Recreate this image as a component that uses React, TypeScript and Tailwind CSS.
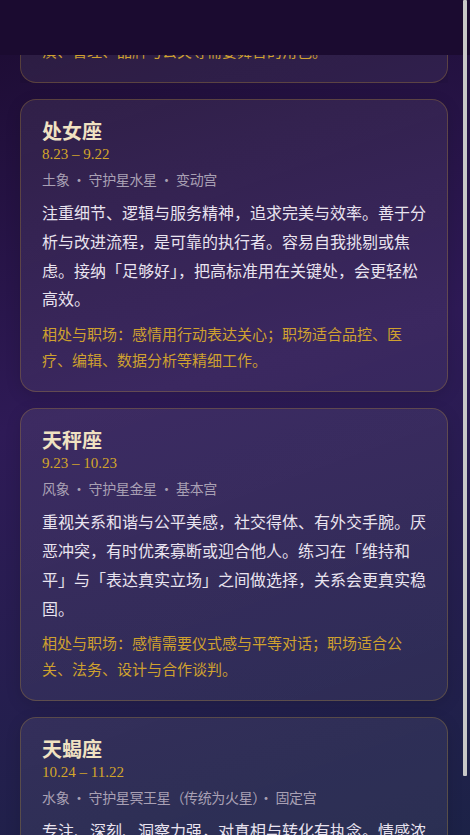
import React from "react";

interface Sign {
    name: string;
    dates: string;
    meta: string;
    desc: string;
    tips: string;
}

const signs: Sign[] = [
    {
        name: "狮子座",
        dates: "7.23 – 8.22",
        meta: "火象 · 守护星太阳 · 固定宫",
        desc: "热情、自信、有领导气场，喜欢被看见与被肯定。慷慨大方，愿意照顾身边的人。需要留意自尊心过强，学会倾听与分享舞台。",
        tips: "相处与职场：感情需要被欣赏与热烈回应；职场适合表演、管理、品牌与公关等需要舞台的角色。",
    },
    {
        name: "处女座",
        dates: "8.23 – 9.22",
        meta: "土象 · 守护星水星 · 变动宫",
        desc: "注重细节、逻辑与服务精神，追求完美与效率。善于分析与改进流程，是可靠的执行者。容易自我挑剔或焦虑。接纳「足够好」，把高标准用在关键处，会更轻松高效。",
        tips: "相处与职场：感情用行动表达关心；职场适合品控、医疗、编辑、数据分析等精细工作。",
    },
    {
        name: "天秤座",
        dates: "9.23 – 10.23",
        meta: "风象 · 守护星金星 · 基本宫",
        desc: "重视关系和谐与公平美感，社交得体、有外交手腕。厌恶冲突，有时优柔寡断或迎合他人。练习在「维持和平」与「表达真实立场」之间做选择，关系会更真实稳固。",
        tips: "相处与职场：感情需要仪式感与平等对话；职场适合公关、法务、设计与合作谈判。",
    },
    {
        name: "天蝎座",
        dates: "10.24 – 11.22",
        meta: "水象 · 守护星冥王星（传统为火星）· 固定宫",
        desc: "专注、深刻、洞察力强，对真相与转化有执念。情感浓烈而忠诚，信任建立缓慢但一旦认定便全情投入。学会放下控制与猜疑，会让关系更松弛。",
        tips: "相处与职场：感情需要深度与专一；职场适合研究、心理、金融与调查类工作。",
    },
];

const SignCard: React.FC<{ sign: Sign }> = ({ sign }) => {
    return (
        <div className="rounded-2xl border border-[rgba(212,166,42,0.26)] bg-[linear-gradient(160deg,rgba(255,255,255,0.075),rgba(255,255,255,0.06))] px-[21px] pt-5 pb-[19px] shadow-[0_4px_16px_rgba(0,0,0,0.12)]">
            <div className="text-[20px] leading-[24px] font-bold text-[#f0e2c2] [font-family:'Liberation_Serif','Noto_Sans_CJK_SC',serif]">
                {sign.name}
            </div>
            <div className="text-[15px] leading-[21px] text-[#d4a62a] [font-family:'Liberation_Serif',serif]">
                {sign.dates}
            </div>
            <div className="mt-1 text-[14px] leading-[21px] tracking-[-0.35px] text-[#a9a0b4]">{sign.meta}</div>
            <p className="mt-2 text-[16px] leading-[28.8px] text-[#e9e3ef]">{sign.desc}</p>
            <p className="mt-2 text-[15px] leading-[25.5px] text-[#cfa12f]">{sign.tips}</p>
        </div>
    );
};

export default function App() {
    return (
        <div className="relative h-[835px] overflow-hidden bg-[linear-gradient(165deg,#1c0b31_0%,#2e1a56_45%,#1c2247_100%)] [font-family:'Noto_Sans_CJK_SC','Noto_Sans',sans-serif]">
            {/* top bar covering the scrolled-off content */}
            <div className="absolute inset-x-0 top-0 z-10 h-[55px] bg-[#1b0b30]" />
            {/* window scrollbar thumb */}
            <div className="absolute right-[3px] top-0 z-20 h-[776px] w-[4px] rounded-[1px] bg-[#c8c8c8]" />
            <div className="flex flex-col gap-4 pl-5 pr-[22px]">
                {/* previous card, mostly scrolled past */}
                <div className="flex h-[83px] flex-col justify-end overflow-hidden">
                    <SignCard sign={signs[0]} />
                </div>
                {signs.slice(1).map((s) => (
                    <SignCard key={s.name} sign={s} />
                ))}
            </div>
        </div>
    );
}
